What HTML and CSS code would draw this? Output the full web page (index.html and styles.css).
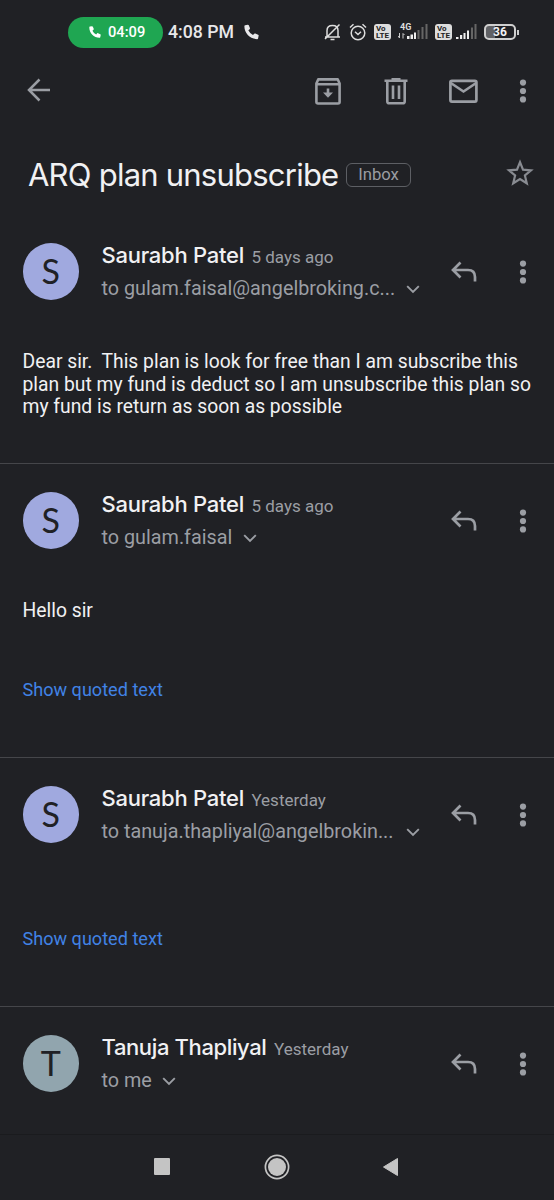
FILE: index.html
```html
<!DOCTYPE html>
<html lang="en">
<head>
<meta charset="utf-8">
<title>ARQ plan unsubscribe</title>
<link rel="stylesheet" href="styles.css">
</head>
<body>
<svg class="defs" width="0" height="0">
  <symbol id="phone" viewBox="0 0 16 16"><path d="M1.2 0.8 4 0.2Q4.8.1 5.1.9L6.3 3.8Q6.5 4.5 6 5L4.600 6.200Q6.200 9.600 9.600 11.300L10.900 9.800Q11.400 9.300 12.100 9.600L15 10.900Q15.800 11.200 15.600 12L15 14.900Q14.800 15.600 14 15.600C6.600 15.600.4 9.400.4 1.900Q.4 1 1.200.8Z" fill="currentColor"/></symbol>
  <symbol id="dots" viewBox="0 0 8 24"><g fill="currentColor"><circle cx="4" cy="3.600" r="3.100"/><circle cx="4" cy="12" r="3.100"/><circle cx="4" cy="20.400" r="3.100"/></g></symbol>
  <symbol id="reply" viewBox="0 0 28 24"><path d="M10.500 2.500 3 10l7.500 7.500M3.500 10H18Q25 10 25 17v4.500" fill="none" stroke="currentColor" stroke-width="2.700"/></symbol>
  <symbol id="chev" viewBox="0 0 14 9"><path d="M1.200 1.200 7 7l5.800-5.800" fill="none" stroke="currentColor" stroke-width="1.900"/></symbol>
</svg>
<div class="screen">
  <header class="status">
    <div class="call"><svg class="call-icon"><use href="#phone"/></svg><span class="call-time">04:09</span></div>
    <span class="clock">4:08 PM</span>
    <svg class="clock-phone"><use href="#phone"/></svg>
    <div class="indicators">
      <svg width="17" height="18" viewBox="0 0 17 18" fill="none" stroke="#ddd" stroke-width="1.500"><path d="M3 14V7.500Q3 2.500 8.500 2.500T14 7.500V13.500M1 14H16M1 16 15.500 1.500"/><path d="M6.500 16.500h4"/></svg>
      <svg class="alarm" width="18" height="18" viewBox="0 0 18 18" fill="none" stroke="#ddd" stroke-width="1.500"><circle cx="9" cy="10" r="6.800"/><path d="M1 4.500 4.500 1.300M17 4.500 13.500 1.300M6 8.700 9 11.500 12 8.700"/></svg>
      <span class="volte volte-a"><b>Vo</b><b>LTE</b></span>
      <div class="signal"><span class="net">4G</span>
        <svg width="30" height="16" viewBox="0 0 30 16"><path d="M1.500 9v5M0 12l1.500 2M5 14.500V9.500L6.500 11" stroke="#ccc" fill="none"/><g fill="#eee"><path d="M9 12h2.500v3H9zM12.500 10.500H15V15h-2.500zM16 8.500h2V15h-2z"/></g><g fill="#666"><path d="M19.500 6h2v9h-2zM23.500 3h2v12h-2zM27.500 0h2v15h-2z"/></g></svg></div>
      <span class="volte volte-b"><b>Vo</b><b>LTE</b></span>
      <svg class="bars" width="21" height="16" viewBox="0 0 21 16"><g fill="#eee"><path d="M0 13h2.500v2H0zM4 11h2.200v4H4zM7.500 9h2v6h-2zM11 6.500h2V15h-2z"/></g><g fill="#666"><path d="M15 3.500h2V15h-2zM18.500 0h2v15h-2z"/></g></svg>
      <div class="battery"><span class="level">36</span></div><i class="nub"></i>
    </div>
  </header>

  <nav class="appbar">
    <svg class="back" width="24" height="24" viewBox="0 0 24 24" fill="none" stroke="currentColor" stroke-width="2.500"><path d="M12.500 1.500 2 12l10.500 10.500M2.500 12H23"/></svg>
    <svg class="archive" width="26" height="27" viewBox="0 0 26 27" fill="none" stroke="currentColor" stroke-width="2.600" stroke-linejoin="round"><path d="M1.400 5.500 3.200 1.400H22.800L24.600 5.500V24Q24.600 25.500 23 25.500H3Q1.400 25.500 1.400 24ZM1.400 6.200H24.600"/><path d="M13 10.500V18"/><path d="M8 14.500H18L13 19.800Z" fill="currentColor" stroke="none"/></svg>
    <svg class="trash" width="24" height="27" viewBox="0 0 24 27" fill="none" stroke="currentColor" stroke-width="2.600"><path d="M.5 2.800H23.500M7.500 1.200h9M3.300 3V23.500Q3.300 25.300 5.300 25.300H18.700Q20.700 25.300 20.700 23.500V3M9 7.500v13.500M15 7.500v13.500"/></svg>
    <svg class="mail" width="29" height="24" viewBox="0 0 29 24" fill="none" stroke="currentColor" stroke-width="2.700"><rect x="1.400" y="1.800" width="26" height="20.800" rx="1.500"/><path d="M1.800 4 14.500 12.500 27.200 4"/></svg>
    <svg class="dots bar-dots"><use href="#dots"/></svg>
  </nav>

  <section class="subject">
    <h1>ARQ plan unsubscribe</h1><span class="label">Inbox</span>
    <svg class="star" width="28" height="28" viewBox="0 0 28 28" fill="none" stroke="currentColor" stroke-width="2.200"><path d="M14 3.200 17 10.700 25 11.300 18.900 16.500 20.800 24.300 14 20.100 7.200 24.300 9.100 16.500 3 11.300 11 10.700Z"/></svg>
  </section>

  <main>
    <article class="message m1">
      <div class="head">
        <span class="avatar">S</span>
        <div class="who"><div class="line"><b class="name">Saurabh Patel</b><time>5 days ago</time></div>
          <div class="to"><span>to gulam.faisal@angelbroking.c...</span><svg class="chev"><use href="#chev"/></svg></div></div>
        <svg class="reply"><use href="#reply"/></svg><svg class="dots"><use href="#dots"/></svg>
      </div>
      <p class="body">Dear sir.&nbsp; This plan is look for free than I am subscribe this<br>plan but my fund is deduct so I am unsubscribe this plan so<br>my fund is return as soon as possible</p>
    </article>
    <article class="message m2">
      <div class="head">
        <span class="avatar">S</span>
        <div class="who"><div class="line"><b class="name">Saurabh Patel</b><time>5 days ago</time></div>
          <div class="to"><span>to gulam.faisal</span><svg class="chev"><use href="#chev"/></svg></div></div>
        <svg class="reply"><use href="#reply"/></svg><svg class="dots"><use href="#dots"/></svg>
      </div>
      <p class="body">Hello sir</p>
      <a class="quoted">Show quoted text</a>
    </article>
    <article class="message m3">
      <div class="head">
        <span class="avatar">S</span>
        <div class="who"><div class="line"><b class="name">Saurabh Patel</b><time>Yesterday</time></div>
          <div class="to"><span>to tanuja.thapliyal@angelbrokin...</span><svg class="chev chev-far"><use href="#chev"/></svg></div></div>
        <svg class="reply"><use href="#reply"/></svg><svg class="dots"><use href="#dots"/></svg>
      </div>
      <a class="quoted">Show quoted text</a>
    </article>
    <article class="message m4">
      <div class="head">
        <span class="avatar teal">T</span>
        <div class="who"><div class="line"><b class="name tight">Tanuja Thapliyal</b><time>Yesterday</time></div>
          <div class="to"><span>to me</span><svg class="chev"><use href="#chev"/></svg></div></div>
        <svg class="reply"><use href="#reply"/></svg><svg class="dots"><use href="#dots"/></svg>
      </div>
    </article>
  </main>

  <footer class="sysnav">
    <i class="recent"></i>
    <svg class="home" width="26" height="26" viewBox="0 0 26 26"><circle cx="13" cy="13" r="11.600" fill="none" stroke="#c4c4c4" stroke-width="1.700"/><circle cx="13" cy="13" r="9" fill="#c4c4c4"/></svg>
    <svg class="prev" width="17" height="20" viewBox="0 0 17 20"><path d="M1.500 10 15.500 1.500V18.500Z" fill="#c4c4c4" stroke="#c4c4c4" stroke-linejoin="round"/></svg>
  </footer>
</div>
</body>
</html>
```
FILE: styles.css
```css
* { box-sizing: border-box; }
body { margin: 0; background: #202125; color: #f1f1f3; font-family: Roboto, "Liberation Sans", sans-serif; }
svg { display: block; flex: none; }
.defs { position: absolute; }
.screen { width: 554px; height: 1200px; overflow: hidden; display: flex; flex-direction: column; white-space: nowrap; }

.status { height: 64px; display: flex; align-items: center; padding-left: 68px; flex: none; }
.call { width: 95px; height: 31px; border-radius: 16px; background: #1fa652; display: flex; align-items: center; padding-left: 21px; gap: 7px; color: #fff; flex: none; }
.call-icon { width: 12px; height: 14px; }
.call-time { font-size: 14.700px; font-weight: 500; }
.clock { margin-left: 5px; width: 71px; font-size: 17.700px; font-weight: 500; color: #e8e8ea; flex: none; }
.clock-phone { width: 15px; height: 16px; margin-left: 5px; color: #e8e8ea; }
.indicators { display: flex; align-items: center; margin-left: 65px; flex: none; }
.alarm { margin-left: 8px; }
.volte { width: 17px; height: 16px; border-radius: 3px; background: #ddd; color: #222; display: flex; flex-direction: column; padding: 1px 0 0 2px; font-size: 8px; line-height: 7px; flex: none; }
.volte-a { margin-left: 7px; }
.volte-b { margin-left: 7px; }
.signal { margin-left: 7px; width: 30px; display: grid; }
.signal > * { grid-area: 1 / 1; }
.net { font-size: 9px; line-height: 8px; font-weight: 700; color: #ddd; padding-left: 2px; margin-top: -1px; }
.bars { margin-left: 4px; }
.battery { width: 32px; height: 16px; border: 2px solid #cfcfcf; border-radius: 5px; margin-left: 7px; background: linear-gradient(90deg, #606165 0 9px, transparent 9px); text-align: center; flex: none; }
.level { display: block; font-size: 12px; line-height: 13px; font-weight: 700; }
.nub { width: 2px; height: 5px; background: #ccc; margin-left: 1px; }

.appbar { height: 54px; display: flex; align-items: center; padding-left: 27px; color: #9b9ea4; flex: none; }
.back { margin-top: -2px; }
.archive { margin-left: 264px; }
.trash { margin-left: 43px; }
.mail { margin-left: 41px; }
.dots { width: 8px; height: 24px; }
.bar-dots { margin-left: 41px; }

.subject { height: 97px; display: flex; align-items: flex-start; padding: 36px 0 0 28px; flex: none; }
h1 { margin: 0; width: 318px; font: 400 31px/42px Inter, sans-serif; letter-spacing: -0.770px; }
.label { width: 65px; height: 24px; margin-top: 9px; border: 1px solid #5d5f64; border-radius: 6px; color: #9a9ca1; font-size: 16.700px; line-height: 22px; text-align: center; }
.star { margin: 5px 0 0 95px; color: #888b91; }

main { flex: 1; min-height: 0; }
.message { padding: 28px 0 0 22.500px; border-bottom: 1px solid #45464a; }
.m1 { height: 249px; }
.m2 { height: 294px; }
.m3 { height: 249px; }
.m4 { height: 128px; border-bottom-color: #1a1b1e; }
.head { display: flex; height: 57px; color: #9b9ea4; }
.avatar { width: 56.500px; height: 57px; border-radius: 50%; background: #a0a9df; color: #202125; font: 400 34px/55px Lato, sans-serif; text-align: center; flex: none; }
.teal { background: #91a5ae; }
.who { width: 328px; margin-left: 22.500px; }
.line { display: flex; align-items: baseline; height: 30px; line-height: 26px; margin-top: -1px; }
.name { font: 500 22px/26px Inter, sans-serif; letter-spacing: -0.260px; color: #f1f1f3; }
.tight { letter-spacing: -0.370px; }
.line time { font-size: 17px; margin-left: 7.500px; }
.to { display: flex; font-size: 19.800px; line-height: 34px; }
.chev { width: 14px; height: 9px; margin: 13px 0 0 10.500px; }
.chev-far { margin-left: 12px; }
.reply { width: 28px; height: 24px; margin: 17px 0 0 20.500px; }
.head .dots { margin: 17px 0 0 41px; }
.body { margin: 51px 0 0; font-size: 19.310px; line-height: 22.700px; }
.quoted { display: block; color: #4183e6; font-size: 18.100px; line-height: 23px; }
.m2 .quoted { margin-top: 55px; }
.m3 .quoted { margin-top: 84px; }

.sysnav { height: 65px; display: flex; align-items: center; padding: 0 0 2px 154px; flex: none; }
.recent { width: 16px; height: 17px; background: #c4c4c4; border-radius: 1px; }
.home { margin-left: 94px; }
.prev { margin-left: 92px; }
```
